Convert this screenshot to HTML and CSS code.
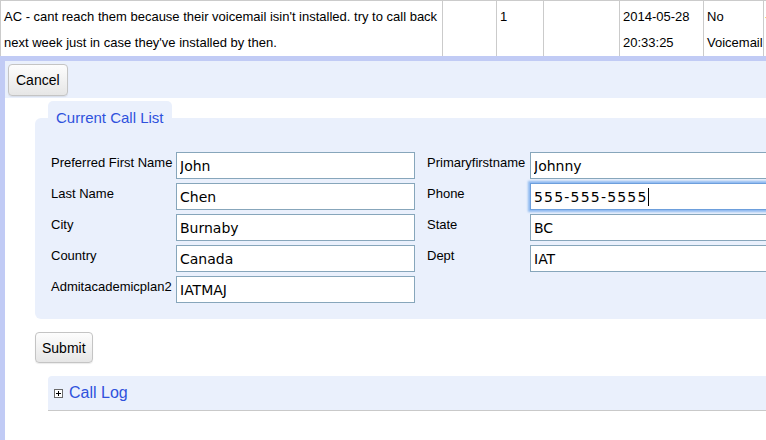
FILE: index.html
```html
<!DOCTYPE html>
<html>
<head>
<meta charset="utf-8">
<link rel="stylesheet" href="styles.css">
</head>
<body>
<table class="log-table">
  <colgroup>
    <col class="c-note"><col class="c-b"><col class="c-c"><col class="c-d"><col class="c-e"><col class="c-f"><col class="c-g">
  </colgroup>
  <tr>
    <td>AC - cant reach them because their voicemail isin't installed. try to call back next week just in case they've installed by then.</td>
    <td></td>
    <td>1</td>
    <td></td>
    <td>2014-05-28 20:33:25</td>
    <td>No Voicemail</td>
    <td class="extra">-</td>
  </tr>
</table>
<div class="panel">
  <div class="toolbar">
    <button class="btn">Cancel</button>
  </div>
  <div class="content">
    <div class="section">
      <div class="tab">Current Call List</div>
      <div class="section-body">
        <div class="fields">
          <label class="lbl">Preferred First Name</label><input class="inp" type="text" value="John">
          <label class="lbl">Primaryfirstname</label><input class="inp" type="text" value="Johnny">
          <label class="lbl">Last Name</label><input class="inp" type="text" value="Chen">
          <label class="lbl">Phone</label><div class="inp focused">555-555-5555<span class="caret"></span></div>
          <label class="lbl">City</label><input class="inp" type="text" value="Burnaby">
          <label class="lbl">State</label><input class="inp" type="text" value="BC">
          <label class="lbl">Country</label><input class="inp" type="text" value="Canada">
          <label class="lbl">Dept</label><input class="inp" type="text" value="IAT">
          <label class="lbl">Admitacademicplan2</label><input class="inp" type="text" value="IATMAJ">
        </div>
      </div>
    </div>
    <button class="btn submit">Submit</button>
    <div class="calllog">
      <span class="plus"></span>
      <span class="calllog-title">Call Log</span>
    </div>
  </div>
</div>
</body>
</html>
```
FILE: styles.css
```css
html, body {
  margin: 0;
  padding: 0;
  overflow: hidden;
  background: #ffffff;
  font-family: "Liberation Sans", Arial, sans-serif;
  color: #000;
}

.log-table {
  border-collapse: collapse;
  table-layout: fixed;
  width: 830px;
  font-size: 13px;
  line-height: 26px;
}
.log-table td {
  border: 1px solid #cbcbcb;
  padding: 3px 2px 0 3px;
  vertical-align: top;
  overflow: hidden;
}
.c-note { width: 442px; }
.c-b { width: 54px; }
.c-c { width: 47px; }
.c-d { width: 76px; }
.c-e { width: 84px; }
.c-f { width: 60px; }
.c-g { width: 67px; }
.log-table td.extra {
  color: #e9a23b;
  padding-left: 1px;
}

.panel {
  border-left: 5px solid #c1cbf5;
  border-top: 5px solid #c1cbf5;
  height: 400px;
  margin-top: -1px;
}

.toolbar {
  background: #eaf0fc;
  padding: 3px 3px 2px;
  height: 32px;
}

.btn {
  font-family: "Liberation Sans", Arial, sans-serif;
  font-size: 14px;
  color: #000;
  height: 32px;
  padding: 0 7px;
  border: 1px solid #c4c4c4;
  border-radius: 4px;
  background: linear-gradient(#fdfdfd, #e6e6e6);
  box-shadow: 0 1px 1px rgba(0,0,0,0.08);
}

.content {
  padding-left: 30px;
  padding-top: 3px;
}

.tab {
  display: block;
  width: max-content;
  margin-left: 13px;
  height: 24px;
  padding: 0 8px;
  line-height: 34px;
  font-size: 15px;
  color: #2f52dd;
  background: #eaf0fc;
  border-radius: 5px 5px 0 0;
}

.section-body {
  margin-top: -7px;
  background: #eaf0fc;
  border-radius: 6px 0 0 6px;
  padding: 34px 0 16px 16px;
}

.fields {
  display: grid;
  grid-template-columns: 125px 239px 115px 239px;
  column-gap: 0;
  row-gap: 4px;
}
.fields .lbl:nth-of-type(even) {
  margin-left: 12px;
}
.lbl {
  font-size: 13px;
  line-height: 15px;
  padding-top: 3px;
  white-space: nowrap;
}
.inp {
  box-sizing: border-box;
  width: 239px;
  height: 27px;
  margin: 0;
  border: 1px solid #87a6bb;
  padding: 1px 3px 0;
  font-family: "DejaVu Sans", "Lucida Grande", sans-serif;
  font-size: 14px;
  color: #000;
  background: #fff;
  outline: none;
}
div.inp {
  line-height: 24px;
  white-space: nowrap;
}
.focused {
  border-color: #6d9fdc;
  box-shadow: 0 0 2px 2px #8fbaf0;
  letter-spacing: 1.2px;
}
.caret {
  display: inline-block;
  width: 1px;
  height: 18px;
  background: #000;
  vertical-align: -4px;
  margin-left: 0;
}

.submit {
  margin-top: 13px;
  height: 31px;
  padding: 0 6px;
}

.calllog {
  margin-top: 13px;
  margin-left: 13px;
  height: 34px;
  background: #eaf0fc;
  border-bottom: 1px solid #c9c9c9;
  border-radius: 4px 0 0 0;
  display: flex;
  align-items: center;
  padding-left: 6px;
}
.plus {
  box-sizing: border-box;
  width: 9px;
  height: 9px;
  border: 1px solid #6a6a6a;
  background:
    linear-gradient(#000, #000) center / 5px 1px no-repeat,
    linear-gradient(#000, #000) center / 1px 5px no-repeat,
    #fff;
  margin-right: 6px;
}
.calllog-title {
  font-size: 16px;
  color: #2f52dd;
}
```
